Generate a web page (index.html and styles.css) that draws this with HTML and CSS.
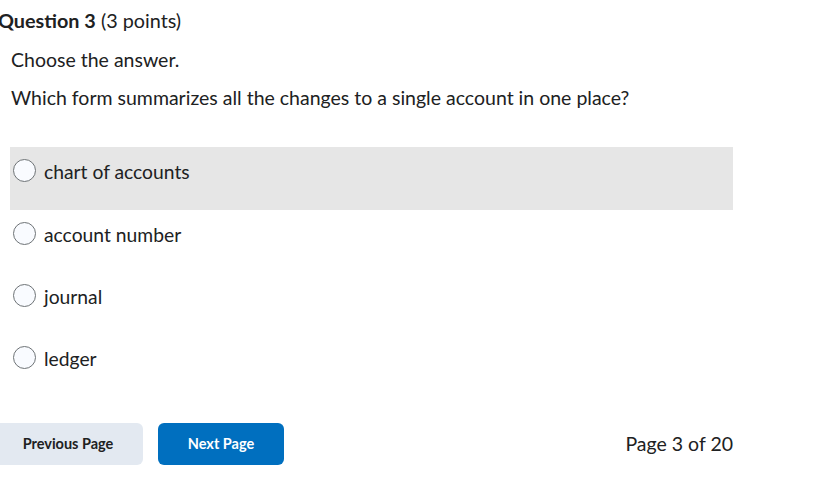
FILE: index.html
```html
<!DOCTYPE html>
<html>
<head>
<meta charset="utf-8">
<link rel="stylesheet" href="styles.css">
</head>
<body>
<div class="page">
  <h2 class="qtitle"><strong>Question 3</strong> (3 points)</h2>
  <div class="qbody">
    <p class="instr">Choose the answer.</p>
    <p class="prompt">Which form summarizes all the changes to a single account in one place?</p>
    <div class="options">
      <label class="opt hover"><span class="radio"></span><span class="otext">chart of accounts</span></label>
      <label class="opt"><span class="radio"></span><span class="otext">account number</span></label>
      <label class="opt"><span class="radio"></span><span class="otext">journal</span></label>
      <label class="opt"><span class="radio"></span><span class="otext">ledger</span></label>
    </div>
  </div>
  <div class="footer">
    <div class="btns">
      <button class="btn prev">Previous Page</button>
      <button class="btn next">Next Page</button>
    </div>
    <div class="pageinfo">Page 3 of 20</div>
  </div>
</div>
</body>
</html>
```
FILE: styles.css
```css
html, body {
  margin: 0;
  padding: 0;
  background: #ffffff;
}
body {
  font-family: Lato, "Noto Sans", sans-serif;
  color: #202122;
  width: 828px;
  height: 494px;
  overflow: hidden;
}
.page {
  width: 733px;
  padding-top: 8px;
}
.qtitle {
  margin: 0 0 0 -2px;
  font-size: 19.8px;
  font-weight: 400;
  line-height: 24px;
}
.qtitle strong {
  font-weight: 700;
}
.qbody {
  padding-left: 10px;
}
.instr {
  margin: 16px 0 0 1px;
  font-size: 19.5px;
  line-height: 24px;
}
.prompt {
  margin: 14px 0 0 1px;
  font-size: 19.5px;
  line-height: 24px;
}
.options {
  margin-top: 37px;
  display: flex;
  flex-direction: column;
}
.opt {
  box-sizing: border-box;
  height: 62px;
  display: flex;
  align-items: flex-start;
  gap: 8px;
  padding: 12px 0 0 3px;
  font-size: 19.3px;
}
.opt.hover {
  background: #e6e6e6;
  height: 63px;
}
.radio {
  width: 23px;
  height: 23px;
  box-sizing: border-box;
  border: 1px solid #6e7376;
  border-radius: 50%;
  background: #f9fbff;
  flex: none;
}
.otext {
  line-height: 24px;
  margin-top: 1px;
}
.footer {
  margin-top: 27px;
  display: flex;
  justify-content: space-between;
  align-items: center;
}
.btns {
  display: flex;
  gap: 15px;
}
.btn {
  height: 42px;
  border: none;
  border-radius: 6px;
  font-family: Lato, "Noto Sans", sans-serif;
  font-size: 14.5px;
  font-weight: 700;
  padding: 0 0 2px 0;
  white-space: nowrap;
}
.prev {
  background: #e3e9f1;
  color: #202122;
  width: 150px;
  margin-left: -7px;
}
.next {
  background: #006fbf;
  color: #ffffff;
  width: 126px;
}
.pageinfo {
  font-size: 19.5px;
  line-height: 24px;
}
```
